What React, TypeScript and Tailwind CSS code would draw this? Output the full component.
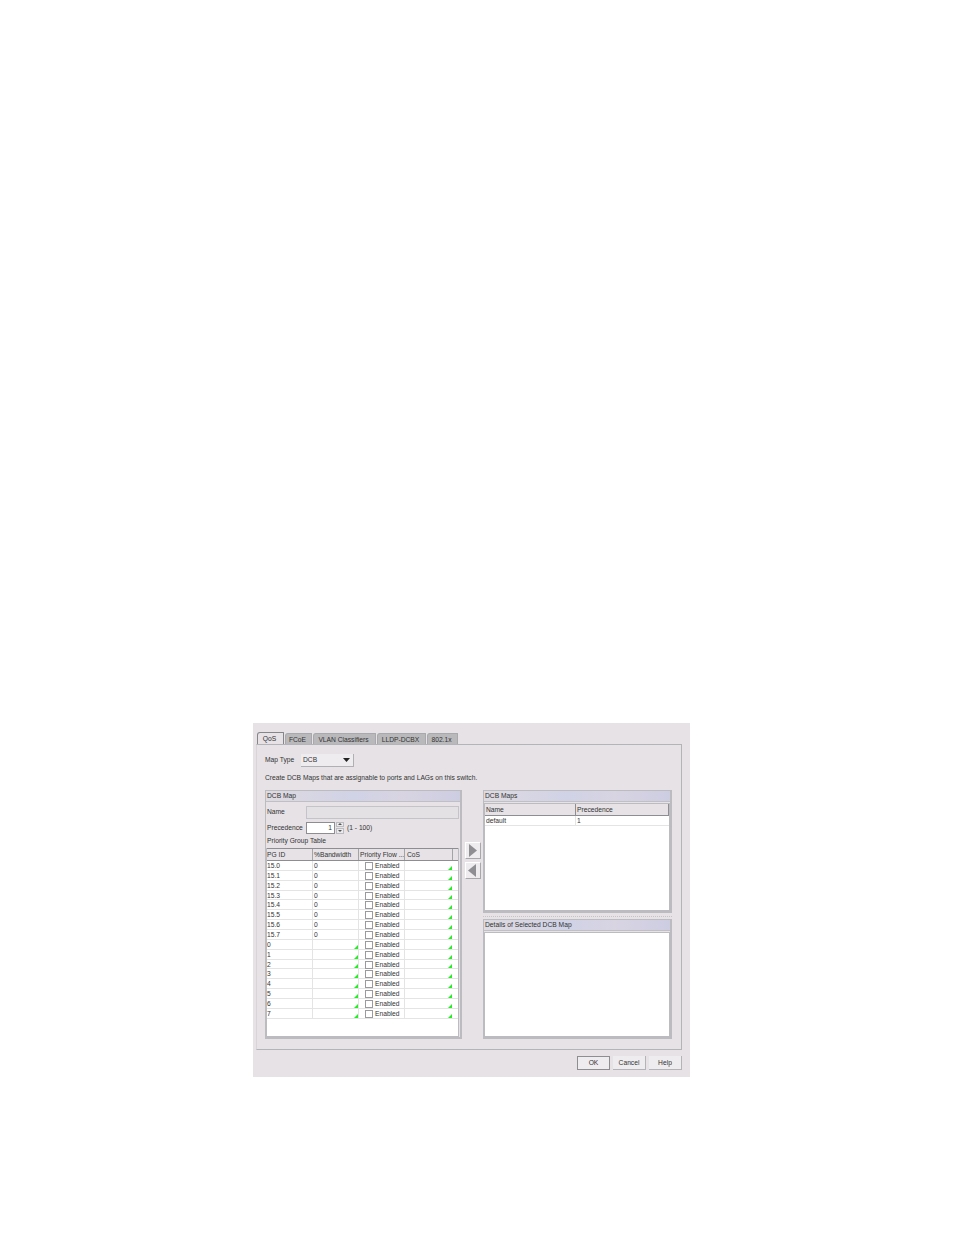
const font = "font-['Liberation_Sans',Arial,sans-serif]";

const rows = [
  { id: "15.0", bw: "0", cosOnly: true },
  { id: "15.1", bw: "0", cosOnly: true },
  { id: "15.2", bw: "0", cosOnly: true },
  { id: "15.3", bw: "0", cosOnly: true },
  { id: "15.4", bw: "0", cosOnly: true },
  { id: "15.5", bw: "0", cosOnly: true },
  { id: "15.6", bw: "0", cosOnly: true },
  { id: "15.7", bw: "0", cosOnly: true },
  { id: "0", bw: "", cosOnly: false },
  { id: "1", bw: "", cosOnly: false },
  { id: "2", bw: "", cosOnly: false },
  { id: "3", bw: "", cosOnly: false },
  { id: "4", bw: "", cosOnly: false },
  { id: "5", bw: "", cosOnly: false },
  { id: "6", bw: "", cosOnly: false },
  { id: "7", bw: "", cosOnly: false },
];

function Tab({ label, width, active }: { label: string; width: string; active?: boolean }) {
  return (
    <div
      className={`${width} flex items-center justify-center pr-[2px] pt-[1px] border border-b-0 rounded-tl-[3px] rounded-tr-[1px] ${
        active ? "h-[12px] bg-[#e6e2e6] border-[#85858a]" : "h-[11px] bg-[#b9b9bb] border-[#a9a9ad]"
      }`}
    >
      {label}
    </div>
  );
}

function Corner() {
  return (
    <svg width="4" height="4" viewBox="0 0 4 4" className="absolute right-0 bottom-0">
      <polygon points="4,0 4,4 0,4" fill="#22ee22" />
    </svg>
  );
}

function PanelTitle({ label }: { label: string }) {
  return (
    <div className="h-[11px] flex items-center px-[1px] bg-[linear-gradient(90deg,#dedae0_0%,#d0d2e6_45%,#d8d4e2_70%,#cdcde2_100%)] border-b border-[#c0c0c4]">
      {label}
    </div>
  );
}

export default function App() {
  return (
    <div className={`${font} w-[954px] h-[1235px] bg-white pt-[723px] pl-[253px] text-[6.7px] leading-[8px] text-[#333333]`}>
      <div className="w-[437px] h-[354px] bg-[#e6e2e6] flex flex-col pt-[10px]">
        <div className="flex items-end gap-[1px] pl-[4px] h-[11px]">
          <Tab label="QoS" width="w-[27px]" active />
          <Tab label="FCoE" width="w-[27px]" />
          <Tab label="VLAN Classifiers" width="w-[63px]" />
          <Tab label="LLDP-DCBX" width="w-[49px]" />
          <Tab label="802.1x" width="w-[31px]" />
        </div>

        <div className="mx-[3px] w-[426px] h-[306px] border-t border-r border-b border-l border-[#b4b4b8] border-l-[#d8d4d8] pl-[8px] pr-[9px] flex flex-col">
          <div className="flex items-center mt-[8px] h-[14px]">
            <span className="w-[36px]">Map Type</span>
            <div className="w-[53px] h-[13px] bg-[#efecef] border-b border-r border-[#b0b0b4] flex items-center justify-between pl-[2px] pr-[2px]">
              <span>DCB</span>
              <svg width="7" height="4" viewBox="0 0 7 4" className="mr-[1px]">
                <polygon points="0,0 7,0 3.5,4" fill="#222" />
              </svg>
            </div>
          </div>
          <div className="mt-[7px] h-[8px] whitespace-nowrap">Create DCB Maps that are assignable to ports and LAGs on this switch.</div>

          <div className="flex mt-[8px]">
            <div className="w-[197px] h-[249px] border border-[#bcbcc0] border-r-2 border-b-2 flex flex-col">
              <PanelTitle label="DCB Map" />
              <div className="flex items-center h-[14px] mt-[3px] pl-[1px]">
                <span className="w-[39px]">Name</span>
                <div className="w-[153px] h-[13px] bg-[#e3e1e4] border border-[#c4c4c8]" />
              </div>
              <div className="flex items-center h-[13px] mt-[2px] pl-[1px]">
                <span className="w-[39px] whitespace-nowrap">Precedence</span>
                <div className="w-[29px] h-[12px] bg-white border border-[#8e8e92] flex items-center justify-end pr-[2px]">1</div>
                <div className="w-[8px] h-[12px] flex flex-col gap-[1px] ml-[1px]">
                  <div className="h-[5px] bg-[#ebe9eb] border border-[#bcbcc0] flex items-center justify-center">
                    <svg width="4" height="2" viewBox="0 0 4 2"><polygon points="2,0 4,2 0,2" fill="#555" /></svg>
                  </div>
                  <div className="h-[6px] bg-[#ebe9eb] border border-[#bcbcc0] flex items-center justify-center">
                    <svg width="4" height="2" viewBox="0 0 4 2"><polygon points="0,0 4,0 2,2" fill="#555" /></svg>
                  </div>
                </div>
                <span className="ml-[3px] whitespace-nowrap">(1 - 100)</span>
              </div>
              <div className="h-[8px] mt-[3px] pl-[1px]">Priority Group Table</div>
              <div className="mt-[3px] w-[193px] flex-1 bg-white border border-[#bcbcc0] border-t-0 flex flex-col">
                <div className="flex h-[13px] bg-[#e6e2e6] border-t border-b border-[#8e8e92] whitespace-nowrap">
                  <div className="w-[46px] border-r border-[#a4a4a8] flex items-center">PG ID</div>
                  <div className="w-[46px] border-r border-[#a4a4a8] pl-[1px] flex items-center">%Bandwidth</div>
                  <div className="w-[46px] border-r border-[#a4a4a8] pl-[1px] flex items-center overflow-hidden">Priority Flow ...</div>
                  <div className="w-[48px] border-r border-[#a4a4a8] pl-[2px] flex items-center">CoS</div>
                  <div className="flex-1" />
                </div>
                {rows.map((r) => (
                  <div key={r.id} className="flex h-[9.87px] border-b border-[#e4e4e4]">
                    <div className="w-[46px] border-r border-[#e4e4e4] pt-[1px] flex items-center">{r.id}</div>
                    <div className="relative w-[46px] border-r border-[#e4e4e4] pl-[1px] pt-[1px] flex items-center">
                      {r.bw}
                      {!r.cosOnly && <Corner />}
                    </div>
                    <div className="w-[46px] border-r border-[#e4e4e4] flex items-center pl-[6px] pt-[1px]">
                      <div className="w-[8px] h-[8px] shrink-0 bg-white border border-[#9a9a9e] mr-[2px]" />
                      Enabled
                    </div>
                    <div className="relative w-[47px] flex items-center">
                      <Corner />
                    </div>
                  </div>
                ))}
              </div>
            </div>

            <div className="w-[21px] flex flex-col items-center pt-[52px] gap-[3px]">
              <div className="w-[16px] h-[17px] bg-[#efecef] border-t border-l border-t-white border-l-white border-r border-b border-r-[#a8a8ac] border-b-[#a8a8ac] flex items-center justify-center">
                <svg width="9" height="13" viewBox="0 0 9 13"><polygon points="1,0 9,6.5 1,13" fill="#8f8f93" /></svg>
              </div>
              <div className="w-[16px] h-[17px] bg-[#efecef] border-t border-l border-t-white border-l-white border-r border-b border-r-[#a8a8ac] border-b-[#a8a8ac] flex items-center justify-center">
                <svg width="9" height="13" viewBox="0 0 9 13"><polygon points="8,0 0,6.5 8,13" fill="#8f8f93" /></svg>
              </div>
            </div>

            <div className="w-[189px] flex flex-col">
              <div className="h-[123px] border border-[#bcbcc0] border-r-2 border-b-2 flex flex-col">
                <PanelTitle label="DCB Maps" />
                <div className="mt-[1px] flex-1 bg-white border border-[#bcbcc0]">
                  <div className="flex h-[12px] bg-[#e6e2e6] border-b border-[#8e8e92]">
                    <div className="w-[91px] border-r border-[#8e8e92] pl-[1px] flex items-center">Name</div>
                    <div className="flex-1 pl-[1px] flex items-center border-r border-[#8e8e92]">Precedence</div>
                  </div>
                  <div className="flex h-[10px] border-b border-[#e4e4e4]">
                    <div className="w-[91px] border-r border-[#e4e4e4] pl-[1px] flex items-center">default</div>
                    <div className="flex-1 pl-[1px] flex items-center">1</div>
                  </div>
                </div>
              </div>
              <div className="mt-[3px] h-[1px] border-t border-dotted border-[#c4c4c8]" />
              <div className="mt-[2px] flex-1 border border-[#bcbcc0] border-r-2 border-b-2 flex flex-col">
                <PanelTitle label="Details of Selected DCB Map" />
                <div className="mt-[1px] flex-1 bg-white border border-[#bcbcc0]" />
              </div>
            </div>
          </div>
        </div>

        <div className="flex justify-end gap-[3px] mt-[6px] pr-[8px]">
          <div className="w-[33px] h-[14px] bg-[#efecef] border border-[#8e8e92] flex items-center justify-center">OK</div>
          <div className="w-[33px] h-[14px] bg-[#efecef] border-b border-r border-[#b4b4b8] flex items-center justify-center">Cancel</div>
          <div className="w-[33px] h-[14px] bg-[#efecef] border-b border-r border-[#b4b4b8] flex items-center justify-center">Help</div>
        </div>
      </div>
    </div>
  );
}
